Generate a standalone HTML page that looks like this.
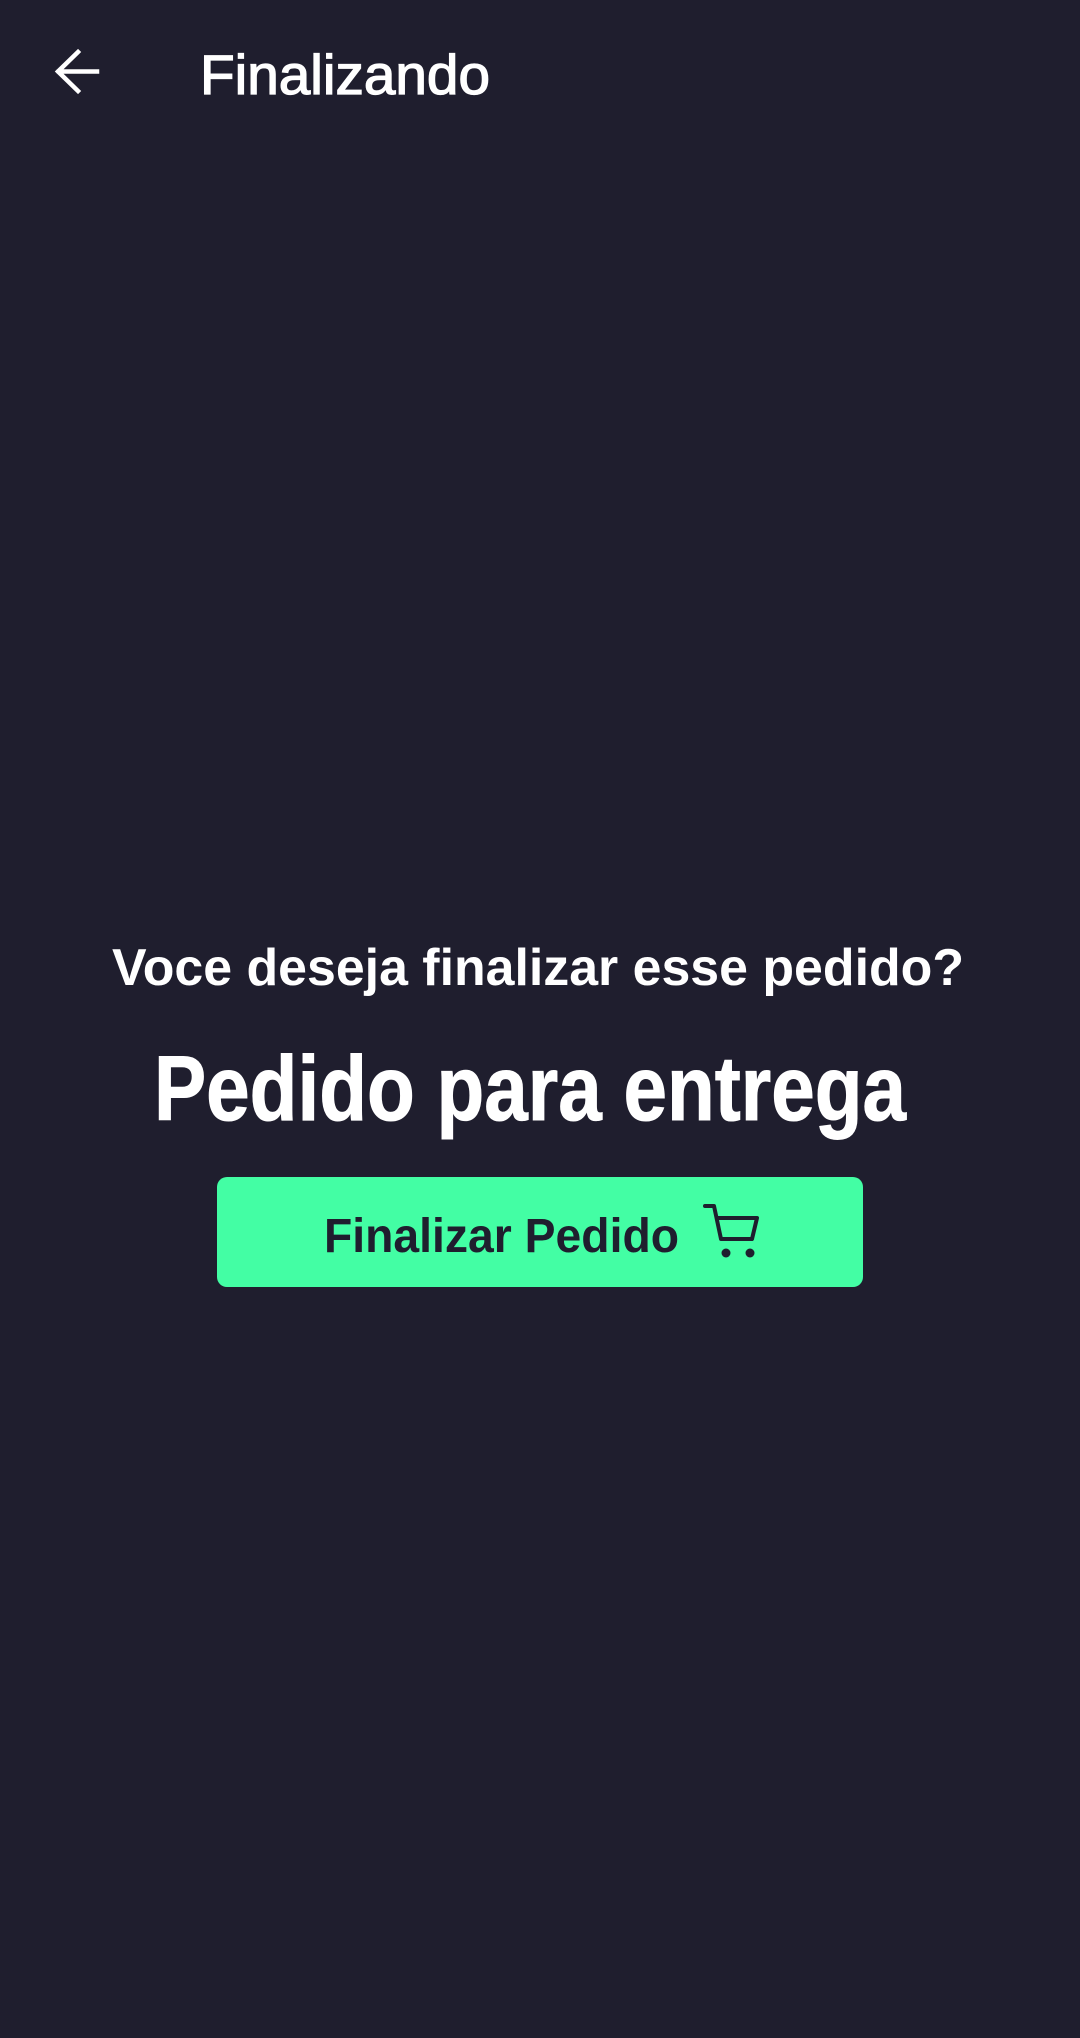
<!DOCTYPE html>
<html><head><meta charset="utf-8"><style>
html,body{margin:0;padding:0;background:#1f1e2e;width:1080px;height:2038px;overflow:hidden}
svg{display:block}
text{font-family:"Liberation Sans",Arial,sans-serif;font-weight:bold}
</style></head><body>
<svg width="1080" height="2038" viewBox="0 0 1080 2038">
<rect width="1080" height="2038" fill="#1f1e2e"/>
<g stroke="#fff" stroke-width="4.5" fill="none" stroke-linecap="square">
<path d="M97 71.5H59M78 52L58 71.5L78 91"/>
</g>
<text x="200" y="94" font-size="56" fill="#fff" stroke="#fff" stroke-width="1.3" textLength="290" lengthAdjust="spacingAndGlyphs" style="font-weight:normal">Finalizando</text>
<text x="112" y="985" font-size="52" fill="#fff" textLength="852" lengthAdjust="spacingAndGlyphs">Voce deseja finalizar esse pedido?</text>
<text x="154" y="1120" font-size="92" fill="#fff" stroke="#fff" stroke-width="1" textLength="752" lengthAdjust="spacingAndGlyphs">Pedido para entrega</text>
<rect x="217" y="1177" width="646" height="110" rx="10" fill="#43fea4"/>
<text x="324" y="1252" font-size="48" fill="#1f1e2e" textLength="355" lengthAdjust="spacingAndGlyphs">Finalizar Pedido</text>
<g stroke="#1f1e2e" stroke-width="4" fill="none" stroke-linejoin="round" stroke-linecap="round">
<path d="M705 1206h9l7 33h31l5-21h-39"/>
</g>
<circle cx="726" cy="1253" r="4.5" fill="#1f1e2e"/>
<circle cx="750" cy="1253" r="4.5" fill="#1f1e2e"/>
</svg>
</body></html>
